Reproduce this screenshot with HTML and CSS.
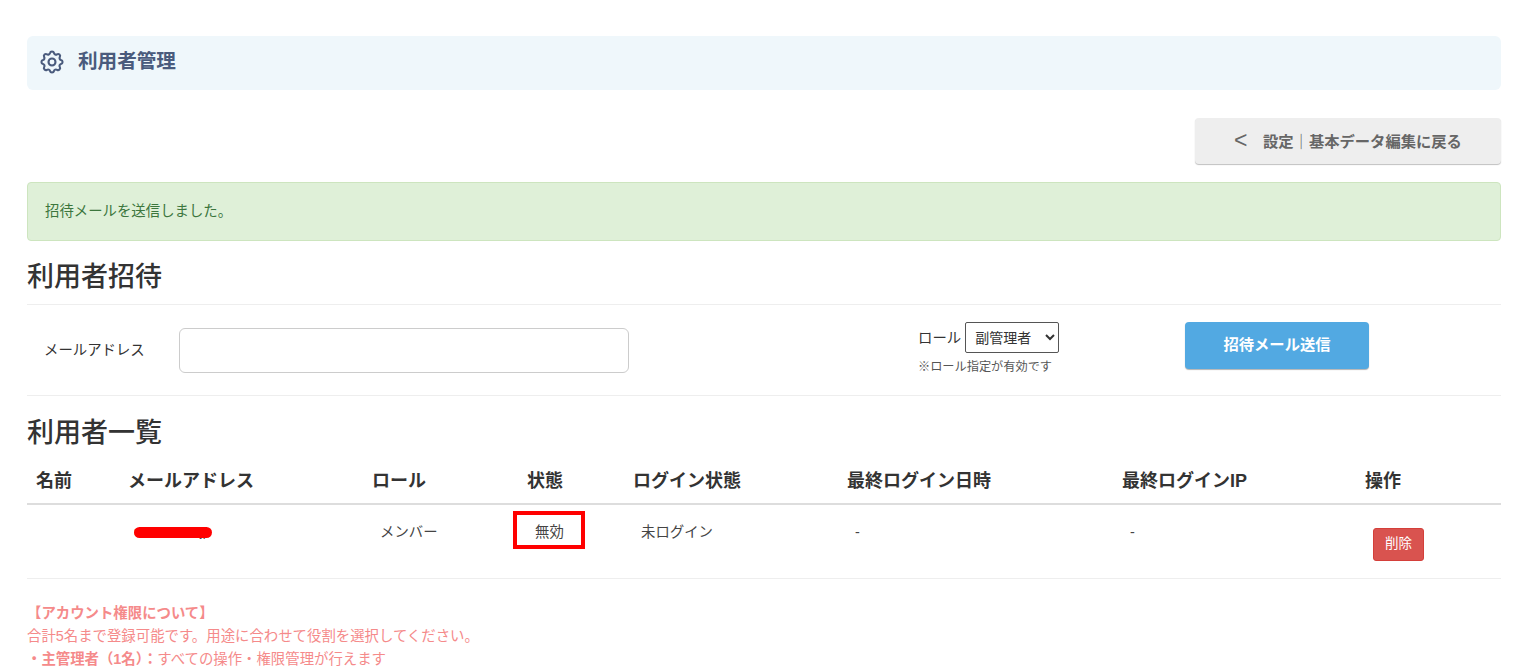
FILE: index.html
```html
<!DOCTYPE html>
<html lang="ja">
<head>
<meta charset="utf-8">
<title>利用者管理</title>
<link rel="stylesheet" href="styles.css">
</head>
<body>
<main class="page">
  <header class="title-bar">
    <svg class="gear" viewBox="0 0 24 24" width="28" height="28" fill="none" stroke="#4a5b7d" stroke-width="1.8" stroke-linecap="round" stroke-linejoin="round"><path d="M10.3 4.3c.4-1.8 3-1.8 3.4 0a1.7 1.7 0 0 0 2.6 1.1c1.5-.9 3.3.8 2.4 2.4a1.7 1.7 0 0 0 1 2.5c1.8.4 1.8 3 0 3.4a1.7 1.7 0 0 0-1 2.6c.9 1.5-.9 3.3-2.4 2.4a1.7 1.7 0 0 0-2.6 1c-.4 1.8-3 1.8-3.4 0a1.7 1.7 0 0 0-2.6-1c-1.5.9-3.3-.9-2.4-2.4a1.7 1.7 0 0 0-1-2.6c-1.8-.4-1.8-3 0-3.4a1.7 1.7 0 0 0 1-2.5c-.9-1.6.9-3.3 2.4-2.4 1 .6 2.3.1 2.6-1.1z"/><circle cx="12" cy="12" r="3"/></svg>
    <h1>利用者管理</h1>
  </header>

  <div class="back-row">
    <a class="back-btn" href="#"><span class="chev">&lt;</span><span>設定｜基本データ編集に戻る</span></a>
  </div>

  <div class="alert">招待メールを送信しました。</div>

  <h2 class="section-title">利用者招待</h2>
  <form class="invite">
    <label class="email-label" for="email">メールアドレス</label>
    <input class="email-input" id="email" type="text">
    <div class="role-box">
      <div class="role-line">
        <label for="role">ロール</label>
        <select id="role" class="role-select"><option>副管理者</option></select>
      </div>
      <p class="role-note">※ロール指定が有効です</p>
    </div>
    <button class="send-btn" type="button">招待メール送信</button>
  </form>

  <h2 class="section-title list-title">利用者一覧</h2>
  <div class="table-wrap">
    <table class="users">
      <colgroup>
        <col class="c0"><col class="c1"><col class="c2"><col class="c3"><col class="c4"><col class="c5"><col class="c6"><col class="c7">
      </colgroup>
      <thead>
        <tr><th>名前</th><th>メールアドレス</th><th>ロール</th><th>状態</th><th>ログイン状態</th><th>最終ログイン日時</th><th>最終ログインIP</th><th>操作</th></tr>
      </thead>
      <tbody>
        <tr>
          <td></td>
          <td><span class="masked">user@mail.jp</span></td>
          <td>メンバー</td>
          <td>無効</td>
          <td>未ログイン</td>
          <td>-</td>
          <td>-</td>
          <td><button class="del-btn" type="button">削除</button></td>
        </tr>
      </tbody>
    </table>
    <div class="highlight"></div>
  </div>

  <section class="notes">
    <p><strong>【アカウント権限について】</strong></p>
    <p>合計5名まで登録可能です。用途に合わせて役割を選択してください。</p>
    <p><strong>・主管理者（1名）：</strong>すべての操作・権限管理が行えます</p>
  </section>
</main>
</body>
</html>
```

FILE: styles.css
```css
* { box-sizing: border-box; }
html, body { margin: 0; height: 668px; overflow: hidden; background: #fff; }
body {
  font-family: "Liberation Sans", "Noto Sans CJK JP", sans-serif;
  font-size: 14.4px;
  color: #333;
}
.page { padding: 36px 34px 0 27px; }

.title-bar {
  height: 54px;
  background: #eff7fb;
  border-radius: 6px;
  display: flex;
  align-items: center;
  padding-left: 11px;
  gap: 12px;
}
.title-bar h1 { margin: 0 0 2px; font-size: 19.6px; font-weight: 700; color: #4a5b7d; line-height: 1; }
.gear { flex: none; margin-bottom: 2px; }

.back-row { display: flex; justify-content: flex-end; margin-top: 28px; }
.back-btn {
  width: 306px;
  height: 46px;
  background: #eee;
  border-radius: 4px;
  box-shadow: 0 1px 1px rgba(0,0,0,.25);
  display: flex;
  align-items: center;
  padding: 0 0 2px 39px;
  color: #666;
  font-size: 15.3px;
  font-weight: 700;
  text-decoration: none;
}
.chev { font-size: 23px; font-weight: 400; width: 29px; }

.alert {
  margin-top: 18px;
  height: 59px;
  background: #dff0d8;
  border: 1px solid #cde5bf;
  border-radius: 4px;
  padding: 0 17px 4px;
  display: flex;
  align-items: center;
  color: #3c763d;
}

.section-title {
  margin: 0;
  font-size: 27px;
  font-weight: 500;
  line-height: 36px;
  color: #333;
  padding-top: 18px;
  height: 64px;
  padding-bottom: 9px;
  border-bottom: 1px solid #eee;
}

.invite {
  height: 91px;
  display: flex;
  align-items: flex-start;
  border-bottom: 1px solid #eee;
}
.email-label { margin-top: 35px; margin-left: 17px; width: 135px; line-height: 20px; }
.email-input {
  margin-top: 23px;
  width: 450px;
  height: 45px;
  border: 1px solid #ccc;
  border-radius: 6px;
  background: #fff;
}
.role-box { margin-left: 289px; margin-top: 17px; width: 267px; }
.role-line { display: flex; align-items: center; gap: 4px; }
.role-line label { padding-bottom: 2px; }
.role-select {
  width: 94px;
  height: 31px;
  font: inherit;
  font-size: 14px;
  padding: 0 0 0 5px;
  background: #fff;
  color: #333;
  border: 1px solid #555;
  border-radius: 2px;
}
.role-note { margin: 6px 0 0; font-size: 12.2px; color: #555; line-height: 16px; }
.send-btn {
  margin-top: 17px;
  width: 184px;
  height: 47px;
  background: #52a9e2;
  color: #fff;
  border: 0;
  border-radius: 4px;
  box-shadow: 0 1px 1px rgba(0,0,0,.3);
  font: inherit;
  font-size: 15.3px;
  font-weight: 700;
  padding: 0 0 5px;
}

.list-title { border-bottom: 0; height: 63px; padding-top: 19px; padding-bottom: 8px; }

.table-wrap { position: relative; }
.users { width: 1474px; border-collapse: collapse; table-layout: fixed; }
.c0 { width: 92px; } .c1 { width: 244px; } .c2 { width: 155px; } .c3 { width: 106px; }
.c4 { width: 214px; } .c5 { width: 275px; } .c6 { width: 243px; } .c7 { width: 145px; }
.users th {
  text-align: left;
  font-size: 18px;
  font-weight: 700;
  padding: 0 0 5px 9px;
  height: 45px;
  color: #333;
  border-bottom: 2px solid #ddd;
}
.users td {
  padding: 17px 0 0 17px;
  height: 74px;
  line-height: 20px;
  color: #444;
  vertical-align: top;
  border-bottom: 1px solid #eee;
}
.users td:nth-child(2) { padding-left: 9px; }
.masked {
  position: relative;
  display: inline-block;
  margin-left: -3px;
  white-space: nowrap;
  width: 78px;
  left: 9px;
  overflow: hidden;
  font-size: 13px;
}
.masked::after {
  content: "";
  position: absolute;
  left: 0;
  right: 0;
  top: 5px;
  height: 11px;
  border-radius: 6px;
  background: #f00;
}
.del-btn {
  display: block;
  width: 51px;
  height: 33px;
  background: #d9534f;
  color: #fff;
  border: 1px solid #d43f3a;
  border-radius: 3px;
  font: inherit;
  font-size: 13.5px;
  line-height: 1;
  padding: 0 0 2px;
  margin-top: 6px;
}
.highlight {
  position: absolute;
  left: 486px;
  top: 52px;
  width: 72px;
  height: 38px;
  border: 4px solid #f00;
}

.notes { margin-top: 23px; color: #f58a8a; line-height: 23px; }
.notes p { margin: 0; }
```
